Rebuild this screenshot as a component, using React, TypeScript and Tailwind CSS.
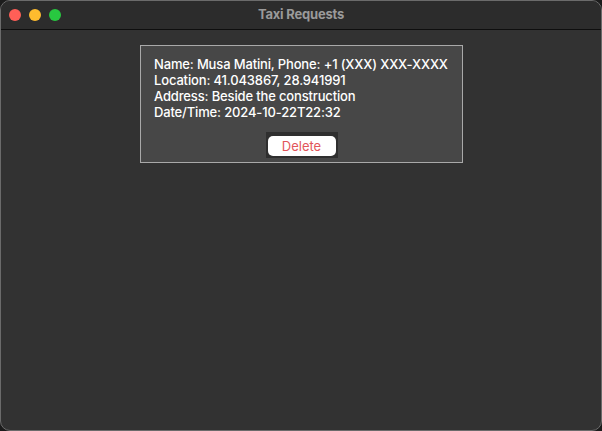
export default function App() {
  return (
    <div className="w-[602px] h-[431px] bg-[#1c1c1c]">
      <div className="w-full h-full flex flex-col rounded-[10px] overflow-hidden border border-[#6b6b6b] bg-[#323232]">
        {/* title bar */}
        <div className="relative h-[29px] flex items-center shrink-0 bg-[#2c2c2c] border-b border-[#0e0e0e]">
          <div className="flex gap-[8px] pl-[8px]">
            <span className="w-[12px] h-[12px] rounded-full bg-[#ff5f57]" />
            <span className="w-[12px] h-[12px] rounded-full bg-[#febc2e]" />
            <span className="w-[12px] h-[12px] rounded-full bg-[#28c840]" />
          </div>
          <div className="absolute inset-0 flex items-center justify-center text-[13px] font-bold text-[#9a9a9a] [font-family:'Inter',sans-serif] tracking-[-0.2px]">
            Taxi Requests
          </div>
        </div>

        {/* content */}
        <div className="flex-1 flex justify-center items-start pt-[15px] pl-[1px]">
          <div className="w-[323px] bg-[#474747] border border-[#a9a9a9] px-[13px] pt-[10px] pb-[4px] flex flex-col [font-family:'Inter',sans-serif] text-[13px] leading-[16px] font-medium tracking-[-0.15px] text-white whitespace-nowrap">
            <div>Name: Musa Matini, Phone: +1 (XXX) XXX-XXXX</div>
            <div>Location: 41.043867, 28.941991</div>
            <div>Address: Beside the construction</div>
            <div>Date/Time: 2024-10-22T22:32</div>
            <div className="flex justify-center mt-[12px]">
              <div className="bg-[#2f2f2f] px-[2px] pt-[4px] pb-[2px]">
                <button className="block w-[68px] h-[20px] rounded-[5px] bg-white text-[#e2555a] text-[13px] leading-[20px] font-normal tracking-normal">
                  Delete
                </button>
              </div>
            </div>
          </div>
        </div>
      </div>
    </div>
  )
}
